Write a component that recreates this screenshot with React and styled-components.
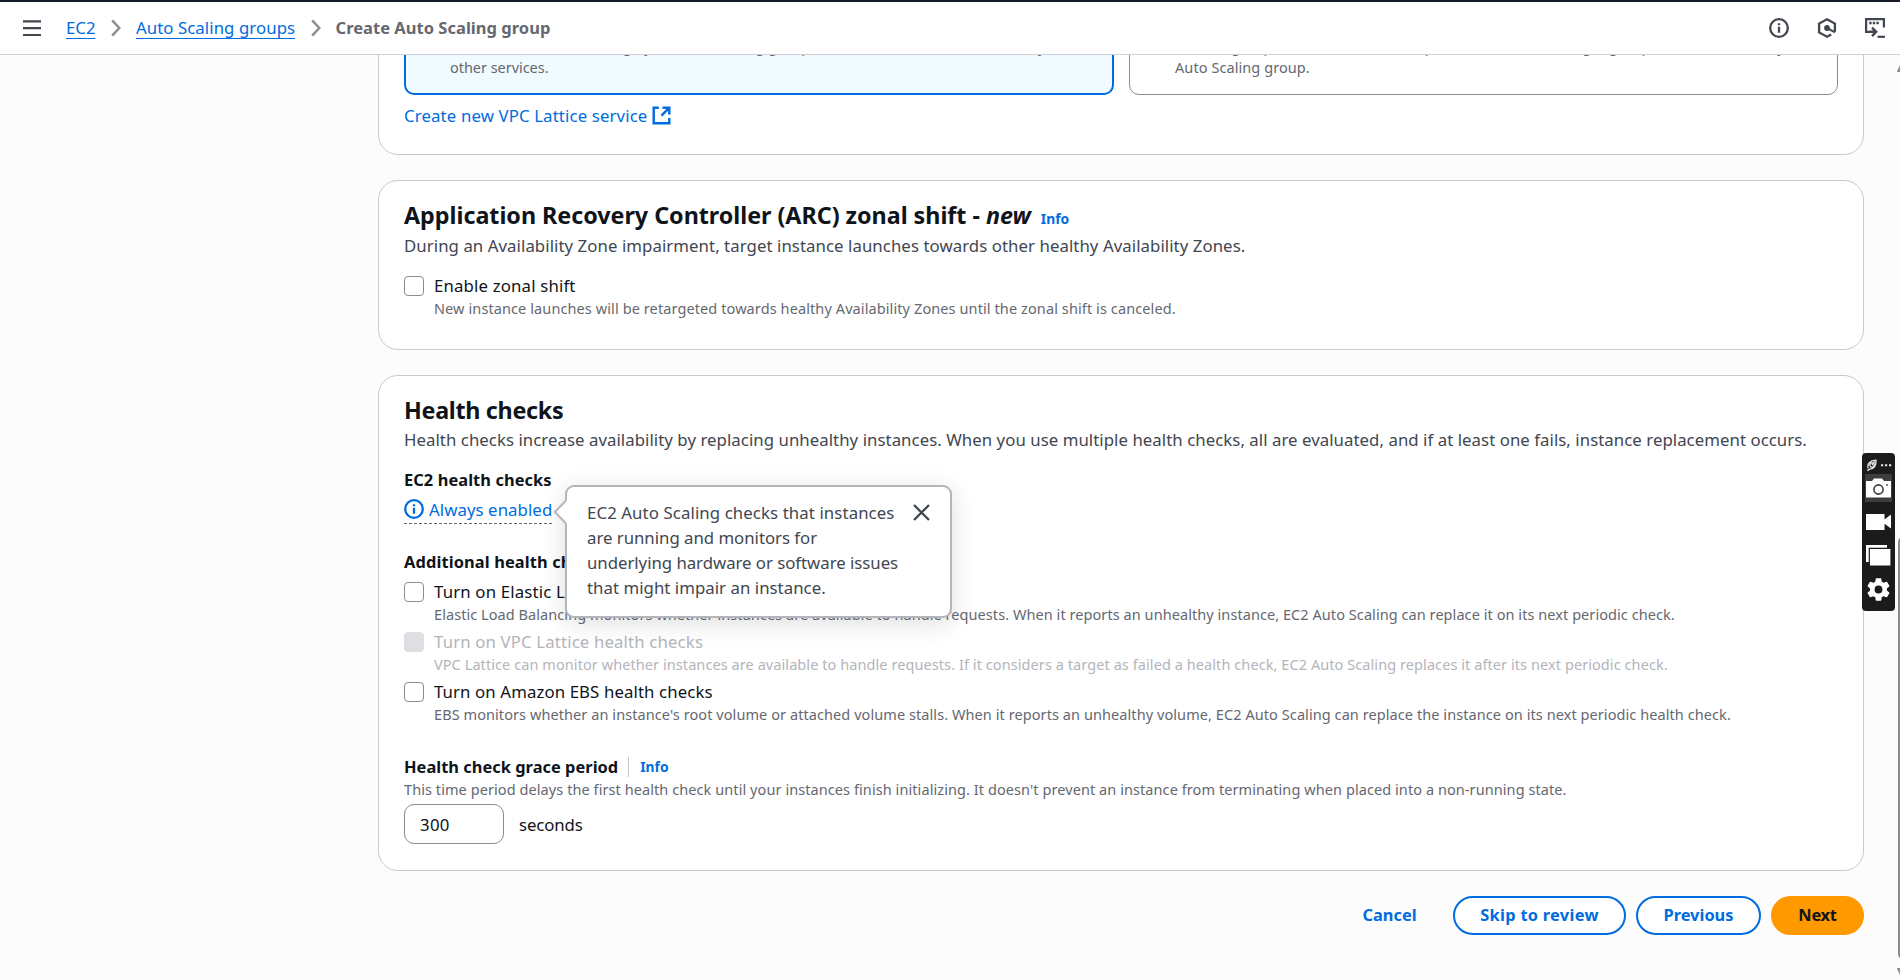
import React from 'react';
import styled, { createGlobalStyle, css } from 'styled-components';

const blue = '#006ce0';

const Global = createGlobalStyle`
  *, *::before, *::after { box-sizing: border-box; }
  html, body { margin: 0; height: 100%; overflow: hidden; }
  body {
    font-family: "Noto Sans", "Open Sans", sans-serif;
    font-size: 16.8px;
    line-height: 25px;
    color: #0f141a;
    background: #fcfcfd;
  }
`;

const Page = styled.div`
  position: relative;
  display: flex;
  flex-direction: column;
  height: 980px;
  overflow: hidden;
`;

/* ---------- top bar ---------- */
const TopBar = styled.header`
  flex: none;
  display: flex;
  align-items: center;
  justify-content: space-between;
  height: 55px;
  padding: 0 15px 0 23px;
  background: #fff;
  border-top: 2px solid #161d26;
  border-bottom: 1px solid #d0d0d8;
  z-index: 2;
`;
const Trail = styled.nav`
  display: flex;
  align-items: center;
  white-space: nowrap;
`;
const MenuIcon = styled.svg`
  display: block;
  width: 18px;
  height: 18px;
  margin-right: 25px;
  color: #424650;
`;
const Crumb = styled.span`
  position: relative;
  top: -1px;
  letter-spacing: ${(p) => p.$ls || 0}px;
  ${(p) =>
    p.$current
      ? css`
          font-size: 16.5px;
          font-weight: 700;
          color: #656871;
        `
      : css`
          color: ${blue};
          text-decoration: underline;
          text-decoration-thickness: 1px;
          text-underline-offset: 4px;
          text-decoration-skip-ink: none;
        `}
`;
const Chevron = styled.svg`
  display: block;
  width: 10px;
  height: 18px;
  margin: 0 15px 0 15.4px;
  color: #8c8c94;
`;
const Tools = styled.div`
  display: flex;
  align-items: center;
  gap: 28px;
  color: #424650;
  svg { display: block; }
`;

/* ---------- cards ---------- */
const Main = styled.main`
  flex: 1;
  min-height: 0;
  display: flex;
  flex-direction: column;
  gap: 25px;
  padding: 0 36px 0 378px;
  overflow: hidden;
`;
const Card = styled.section`
  flex: none;
  padding: 19px 25px ${(p) => p.$bottom}px;
  background: #fff;
  border: 1px solid #c9c9d0;
  border-radius: 20px;
  ${(p) => p.$scrolled && css`margin-top: -${p.$scrolled}px;`}
`;
const Tiles = styled.div`
  display: grid;
  grid-template-columns: 710px 709px;
  gap: 15px;
`;
const Tile = styled.div`
  height: 160px;
  display: flex;
  flex-direction: column;
  justify-content: flex-end;
  gap: 1px;
  padding: 0 20px ${(p) => (p.$selected ? 16 : 17)}px ${(p) => (p.$selected ? 44 : 45)}px;
  border: ${(p) => (p.$selected ? `2px solid ${blue}` : '1px solid #8c8c94')};
  border-radius: 10px;
  background: ${(p) => (p.$selected ? '#f0fbff' : '#fff')};
`;
const Hint = styled.p`
  margin: 0;
  font-size: 14.5px;
  line-height: 20px;
  color: ${(p) => (p.$disabled ? '#b4b4bb' : '#656871')};
  letter-spacing: ${(p) => p.$ls ?? 0.076}px;
  white-space: nowrap;
`;
const ExternalLink = styled.a`
  display: flex;
  align-items: center;
  gap: 5px;
  margin-top: 8px;
  color: ${blue};
  letter-spacing: 0.13px;
`;
const Title = styled.h2`
  margin: 0;
  display: flex;
  align-items: baseline;
  font-size: 23.3px;
  font-weight: 700;
  line-height: 30px;
  letter-spacing: ${(p) => p.$ls}px;
  white-space: pre;
`;
const InfoLink = styled.a`
  margin-left: ${(p) => p.$gap}px;
  font-size: 13.8px;
  font-weight: 700;
  line-height: 20px;
  letter-spacing: 0;
  color: ${blue};
`;
const Lead = styled.p`
  margin: ${(p) => p.$top}px 0 15px;
  color: #424650;
  letter-spacing: ${(p) => p.$ls}px;
  white-space: nowrap;
`;
const Label = styled.div`
  display: flex;
  align-items: center;
  font-size: 16.4px;
  font-weight: 700;
  letter-spacing: ${(p) => p.$ls || 0}px;
  white-space: pre;
`;

/* ---------- checkbox ---------- */
const OptionList = styled.div`
  margin: 5px 0 30px;
`;
const Option = styled.div`
  display: grid;
  grid-template-columns: 20px 1fr;
  column-gap: 10px;
  & + & { margin-top: 5px; }
`;
const Box = styled.span`
  width: 20px;
  height: 20px;
  margin-top: 3px;
  border-radius: 4px;
  border: 1px solid ${(p) => (p.$disabled ? '#dedee3' : '#8c8c94')};
  background: ${(p) => (p.$disabled ? '#dedee3' : '#fff')};
`;
const OptionName = styled.div`
  color: ${(p) => (p.$disabled ? '#b4b4bb' : '#0f141a')};
  letter-spacing: ${(p) => p.$ls}px;
`;

const Check = ({ name, hint, disabled, ls, hintLs }) => (
  <Option>
    <Box $disabled={disabled} />
    <div>
      <OptionName $disabled={disabled} $ls={ls}>{name}</OptionName>
      <Hint $disabled={disabled} $ls={hintLs}>{hint}</Hint>
    </div>
  </Option>
);

/* ---------- status and popover ---------- */
const StatusRow = styled.div`
  display: flex;
  margin: 5px 0 25px;
`;
const Status = styled.div`
  position: relative;
  display: flex;
  align-items: center;
  gap: 5px;
  height: 27px;
  padding-bottom: 2px;
  color: ${blue};
  letter-spacing: 0.07px;
  border-bottom: 1px dashed #656871;
  svg { display: block; }
`;
const Popover = styled.div`
  position: absolute;
  z-index: 1;
  left: 161px;
  top: -12px;
  display: flex;
  align-items: flex-start;
  justify-content: space-between;
  width: 387px;
  height: 133px;
  padding: 13px 20px 14px 20px;
  background: #fff;
  border: 2px solid #b4b4bb;
  border-radius: 9px;
  box-shadow: 0 5px 25px 1px rgba(0, 7, 22, 0.12);
  color: #424650;
  letter-spacing: -0.03px;
  white-space: nowrap;
`;
const PopoverLine = styled.div`
  letter-spacing: ${(p) => p.$ls}px;
`;
const Arrow = styled.svg`
  position: absolute;
  left: -14px;
  top: 12px;
`;
const CloseIcon = styled.svg`
  margin-top: 4px;
`;

const Divider = styled.span`
  width: 1px;
  height: 20px;
  margin: 0 0 0 10px;
  background: #c6c6cd;
`;
const FieldRow = styled.div`
  display: flex;
  align-items: center;
  gap: 15px;
  margin-top: 5px;
  letter-spacing: -0.1px;
`;
const Field = styled.div`
  display: flex;
  align-items: center;
  width: 100px;
  height: 40px;
  padding-left: 15px;
  letter-spacing: 0.3px;
  border: 1px solid #8c8c94;
  border-radius: 10px;
  background: #fff;
`;

/* ---------- actions ---------- */
const Actions = styled.div`
  display: flex;
  justify-content: flex-end;
  gap: 10px;
`;
const Button = styled.button`
  width: ${(p) => p.$w}px;
  height: 39px;
  padding: 0 0 2px;
  font: 700 16.4px/25px "Noto Sans", sans-serif;
  letter-spacing: ${(p) => p.$ls || 0}px;
  color: ${(p) => (p.$kind === 'primary' ? '#0f141a' : blue)};
  background: ${(p) => ({ primary: '#ff9900', normal: '#fff', link: 'transparent' }[p.$kind])};
  border: 2px solid ${(p) => ({ primary: '#ff9900', normal: blue, link: 'transparent' }[p.$kind])};
  border-radius: 20px;
`;

/* ---------- floating capture bar and scrollbar ---------- */
const CaptureBar = styled.aside`
  position: absolute;
  z-index: 3;
  left: 1862px;
  top: 453px;
  width: 33px;
  height: 158px;
  padding-top: 3px;
  display: flex;
  flex-direction: column;
  align-items: center;
  border-radius: 4px;
  background: #1b1b1b;
  svg { display: block; }
`;
const Tool = styled.div`
  display: flex;
  align-items: center;
  justify-content: center;
  width: 27px;
  height: ${(p) => p.$h}px;
  background: ${(p) => (p.$active ? '#3d3d3d' : 'transparent')};
`;
const ScrollTrack = styled.div`
  position: absolute;
  z-index: 3;
  right: 0;
  top: 55px;
  width: 3px;
  height: 925px;
  padding: 10px 0 5px;
  display: flex;
  flex-direction: column;
  justify-content: space-between;
  overflow: hidden;
  svg { display: block; }
`;
const Thumb = styled.div`
  width: 10px;
  height: 423px;
  margin: 465px 0 9px 0.5px;
  border-radius: 5px;
  background: #8b8b8b;
`;

const InfoCircle = ({ size, stroke }) => (
  <svg width={size} height={size} viewBox="0 0 20 20" fill="none" stroke="currentColor" strokeWidth={stroke}>
    <circle cx="10" cy="10" r="8.8" />
    <path d="M10 8.700v6M10 5.200v2" />
  </svg>
);
const Separator = () => (
  <Chevron viewBox="0 0 10 18" fill="none" stroke="currentColor" strokeWidth="2.4">
    <path d="M1.200 1.400 8.300 9l-7.100 7.600" />
  </Chevron>
);

export default function App() {
  return (
    <Page>
      <Global />
      <TopBar>
        <Trail>
          <MenuIcon viewBox="0 0 18 18" stroke="currentColor" strokeWidth="2.2">
            <path d="M0 2.400h18M0 9.200h18M0 16h18" />
          </MenuIcon>
          <Crumb>EC2</Crumb>
          <Separator />
          <Crumb $ls={0.07}>Auto Scaling groups</Crumb>
          <Separator />
          <Crumb $current $ls={0.02}>Create Auto Scaling group</Crumb>
        </Trail>
        <Tools>
          <InfoCircle size={20} stroke={2.3} />
          <svg width="20" height="20" viewBox="0 0 20 20" fill="none" stroke="currentColor" strokeWidth="2.3">
            <path d="M17.900 13.800V5.600L10 1.300 2.100 5.600v8.800L10 18.700l4.200-2.300" />
            <circle cx="10" cy="10" r="2.900" fill="currentColor" stroke="none" />
            <path d="m10 10 8 4.300" strokeWidth="2" />
          </svg>
          <svg width="20" height="20" viewBox="0 0 20 20" fill="none" stroke="currentColor" strokeWidth="2.2">
            <path d="M5.500 13.800H1.100V1.200h17.800v8.300" />
            <path d="M4.200 5h2.400M7.800 5h2.400M11.400 5h2.400" strokeWidth="2.400" />
            <path d="M4.500 13.800h6M7 9.600l4.200 4.200L7 18.200" strokeWidth="2.400" />
            <path d="M12.500 18.800H20" />
          </svg>
        </Tools>
      </TopBar>

      <Main>
        <Card $scrolled={140} $bottom={26}>
          <Tiles>
            <Tile $selected>
              <Hint>VPC Lattice will not manage your Auto Scaling group's network access and connectivity with</Hint>
              <Hint $ls={-0.04}>other services.</Hint>
            </Tile>
            <Tile>
              <Hint>Incoming requests associated with specified VPC Lattice target groups will be routed to your</Hint>
              <Hint>Auto Scaling group.</Hint>
            </Tile>
          </Tiles>
          <ExternalLink>
            Create new VPC Lattice service
            <svg width="19" height="19" viewBox="0 0 19 19" fill="none" stroke="currentColor" strokeWidth="2.4">
              <path d="M6.800 1.800H1.700v15.500h15.600v-5.300" />
              <path d="M10.500 1.800h6.800v6.600M17 2.100l-7.600 7.600" />
            </svg>
          </ExternalLink>
        </Card>

        <Card $bottom={31}>
          <Title $ls={-0.02}>
            {'Application Recovery Controller (ARC) zonal shift - '}
            <em>new</em>
            <InfoLink $gap={10}>Info</InfoLink>
          </Title>
          <Lead $top={3} $ls={0.065}>
            During an Availability Zone impairment, target instance launches towards other healthy Availability Zones.
          </Lead>
          <Check
            ls={0.16}
            hintLs={0.1}
            name="Enable zonal shift"
            hint="New instance launches will be retargeted towards healthy Availability Zones until the zonal shift is canceled."
          />
        </Card>

        <Card $bottom={26}>
          <Title $ls={-0.3}>Health checks</Title>
          <Lead $top={2} $ls={0.05}>
            Health checks increase availability by replacing unhealthy instances. When you use multiple health checks, all
            are evaluated, and if at least one fails, instance replacement occurs.
          </Lead>

          <Label $ls={0.08}>EC2 health checks</Label>
          <StatusRow>
            <Status>
              <InfoCircle size={20} stroke={2.3} />
              Always enabled
              <Popover>
                <Arrow width="14" height="26" viewBox="0 0 14 26">
                  <path d="M14 1 2 13l12 12z" fill="#fff" />
                  <path d="M13 1.500 1.800 13 13 24.500" fill="none" stroke="#b4b4bb" strokeWidth="2" />
                </Arrow>
                <div>
                  <PopoverLine $ls={0.1}>EC2 Auto Scaling checks that instances</PopoverLine>
                  <PopoverLine $ls={-0.02}>are running and monitors for</PopoverLine>
                  <PopoverLine $ls={-0.03}>underlying hardware or software issues</PopoverLine>
                  <PopoverLine $ls={0.04}>that might impair an instance.</PopoverLine>
                </div>
                <CloseIcon width="17" height="17" viewBox="0 0 17 17" fill="none" stroke="#424650" strokeWidth="2.3">
                  <path d="m1 1 15 15M16 1 1 16" />
                </CloseIcon>
              </Popover>
            </Status>
          </StatusRow>

          <Label $ls={0.12}>Additional health check types - optional</Label>
          <OptionList>
            <Check
              ls={0.16}
              hintLs={0.064}
              name="Turn on Elastic Load Balancing health checks"
              hint="Elastic Load Balancing monitors whether instances are available to handle requests. When it reports an unhealthy instance, EC2 Auto Scaling can replace it on its next periodic check."
            />
            <Check
              disabled
              ls={0.14}
              name="Turn on VPC Lattice health checks"
              hint="VPC Lattice can monitor whether instances are available to handle requests. If it considers a target as failed a health check, EC2 Auto Scaling replaces it after its next periodic check."
            />
            <Check
              ls={0.11}
              name="Turn on Amazon EBS health checks"
              hint="EBS monitors whether an instance's root volume or attached volume stalls. When it reports an unhealthy volume, EC2 Auto Scaling can replace the instance on its next periodic health check."
            />
          </OptionList>

          <Label $ls={0.03}>
            Health check grace period
            <Divider />
            <InfoLink $gap={11}>Info</InfoLink>
          </Label>
          <Hint>
            This time period delays the first health check until your instances finish initializing. It doesn't prevent an
            instance from terminating when placed into a non-running state.
          </Hint>
          <FieldRow>
            <Field>300</Field>
            seconds
          </FieldRow>
        </Card>

        <Actions>
          <Button $kind="link" $w={107}>Cancel</Button>
          <Button $kind="normal" $w={173} $ls={0.28}>Skip to review</Button>
          <Button $kind="normal" $w={125}>Previous</Button>
          <Button $kind="primary" $w={93} $ls={-0.25}>Next</Button>
        </Actions>
      </Main>

      <CaptureBar>
        <Tool $h={18}>
          <svg width="27" height="14" viewBox="0 0 27 14" fill="none" stroke="#e8e8e8" strokeWidth="1.3">
            <path d="M3.200 10.500C1.800 6 5 2.600 11 2.200c.6 5-2.200 8.800-6.300 9L2.300 12.600" />
            <circle cx="7" cy="7" r="2.200" />
            <path d="M7 7l3-3.500" />
            <path d="M16 7.300h2.200M20 7.300h2.200M24 7.300h2.200" strokeWidth="2" />
          </svg>
        </Tool>
        <Tool $h={28} $active>
          <svg width="27" height="28" viewBox="0 0 27 28">
            <path d="M1 7h6l2-2.500h8L19 7h7v16.500H1z" fill="#fff" />
            <circle cx="13.500" cy="15.500" r="4.600" fill="#fff" stroke="#3d3d3d" strokeWidth="1.600" />
            <circle cx="22" cy="11" r="0.900" fill="#3d3d3d" />
          </svg>
        </Tool>
        <Tool $h={39}>
          <svg width="27" height="18" viewBox="0 0 27 18">
            <path d="M1 1h18.500v5.500L26 1.500v14l-6.500-4.800V17H1z" fill="#fff" />
          </svg>
        </Tool>
        <Tool $h={29}>
          <svg width="27" height="23" viewBox="0 0 27 23">
            <path d="M1 1h21v17H1z" fill="#fff" />
            <path d="M4.300 4.300H26V22H4.300z" fill="#fff" stroke="#1b1b1b" strokeWidth="1.200" />
          </svg>
        </Tool>
        <Tool $h={39}>
          <svg width="29" height="29" viewBox="0 0 24 24" fill="#fff">
            <path d="M19.430 12.980c.04-.32.07-.64.07-.98s-.03-.66-.07-.98l2.110-1.650c.19-.15.24-.42.12-.64l-2-3.460c-.12-.22-.39-.3-.61-.22l-2.490 1c-.52-.4-1.080-.73-1.690-.98l-.38-2.650C14.460 2.180 14.250 2 14 2h-4c-.25 0-.46.18-.49.42l-.38 2.650c-.61.25-1.170.59-1.690.98l-2.490-1c-.23-.09-.49 0-.61.22l-2 3.460c-.13.22-.07.49.12.64l2.110 1.650c-.04.32-.07.65-.07.98s.03.66.07.98l-2.110 1.650c-.19.15-.24.42-.12.64l2 3.460c.12.22.39.3.61.22l2.490-1c.52.4 1.080.73 1.690.98l.38 2.650c.03.24.24.42.49.42h4c.25 0 .46-.18.49-.42l.38-2.650c.61-.25 1.170-.59 1.690-.98l2.490 1c.23.09.49 0 .61-.22l2-3.460c.12-.22.07-.49-.12-.64l-2.110-1.650zM12 15.500a3.500 3.500 0 1 1 0-7 3.500 3.500 0 0 1 0 7z" />
          </svg>
        </Tool>
      </CaptureBar>

      <ScrollTrack>
        <svg width="3" height="7" viewBox="0 0 3 7" fill="#8b8b8b">
          <path d="M0 6.500 3 0v7H.5z" />
        </svg>
        <Thumb />
        <svg width="3" height="7" viewBox="0 0 3 7" fill="#8b8b8b">
          <path d="M0 .5 3 7V0H.5z" />
        </svg>
      </ScrollTrack>
    </Page>
  );
}
